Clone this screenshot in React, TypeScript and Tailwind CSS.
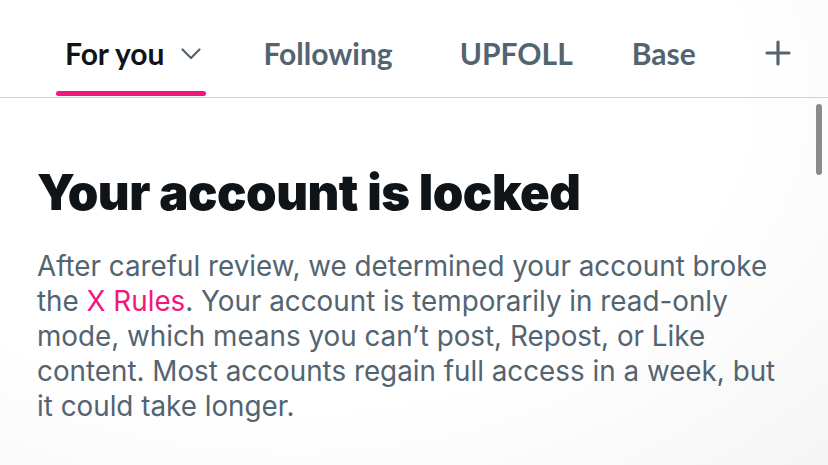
const tabs = [
  { label: "Following", ml: "ml-[62px]" },
  { label: "UPFOLL", ml: "ml-[67px]" },
  { label: "Base", ml: "ml-[59px]" },
];

export default function App() {
  return (
    <div className="relative h-[465px] w-[828px] overflow-hidden bg-[radial-gradient(ellipse_at_35%_20%,#ffffff_60%,#f5f5f5_100%)]">
      {/* Tab bar */}
      <div className="flex h-[98px] items-center border-b border-[#cfd4d8] pl-[65px] pt-[9px] font-['Lato',sans-serif] text-[30px] font-bold">
        <div className="relative flex h-full items-center text-[#0f1419]">
          <span>For you</span>
          <svg className="ml-[17px] mt-[2px]" width="20" height="12" viewBox="0 0 20 12" fill="none">
            <polyline points="1.5,1.5 10,10 18.5,1.5" stroke="#536471" strokeWidth="2.2" strokeLinecap="round" strokeLinejoin="round" />
          </svg>
          <div className="absolute bottom-[1px] left-[-9px] right-[-5px] h-[5px] rounded-full bg-[#f0187d]" />
        </div>
        {tabs.map((t) => (
          <span key={t.label} className={`${t.ml} text-[#536471]`}>
            {t.label}
          </span>
        ))}
        <svg className="ml-[69px]" width="26" height="26" viewBox="0 0 26 26" fill="none">
          <path d="M13 2v22M2 13h22" stroke="#536471" strokeWidth="3.2" strokeLinecap="round" />
        </svg>
      </div>

      {/* Scrollbar */}
      <div className="absolute right-[6px] top-[104px] h-[71px] w-[6px] rounded-full bg-[#8a8a8a]" />

      {/* Content */}
      <div className="px-[37px] pt-[66px] font-['Inter',sans-serif]">
        <h1 className="text-[49px] font-black leading-[58px] tracking-[-0.5px] text-[#0f1419]">
          Your account is locked
        </h1>
        <p className="mt-[27px] w-[760px] text-[27.8px] leading-[35px] text-[#536471]">
          After careful review, we determined your account broke the{" "}
          <span className="text-[#f0187d]">X Rules</span>. Your account is temporarily in read-only mode,
          which means you can’t post, Repost, or Like content. Most accounts regain full access in a week,
          but it could take longer.
        </p>
      </div>
    </div>
  );
}
